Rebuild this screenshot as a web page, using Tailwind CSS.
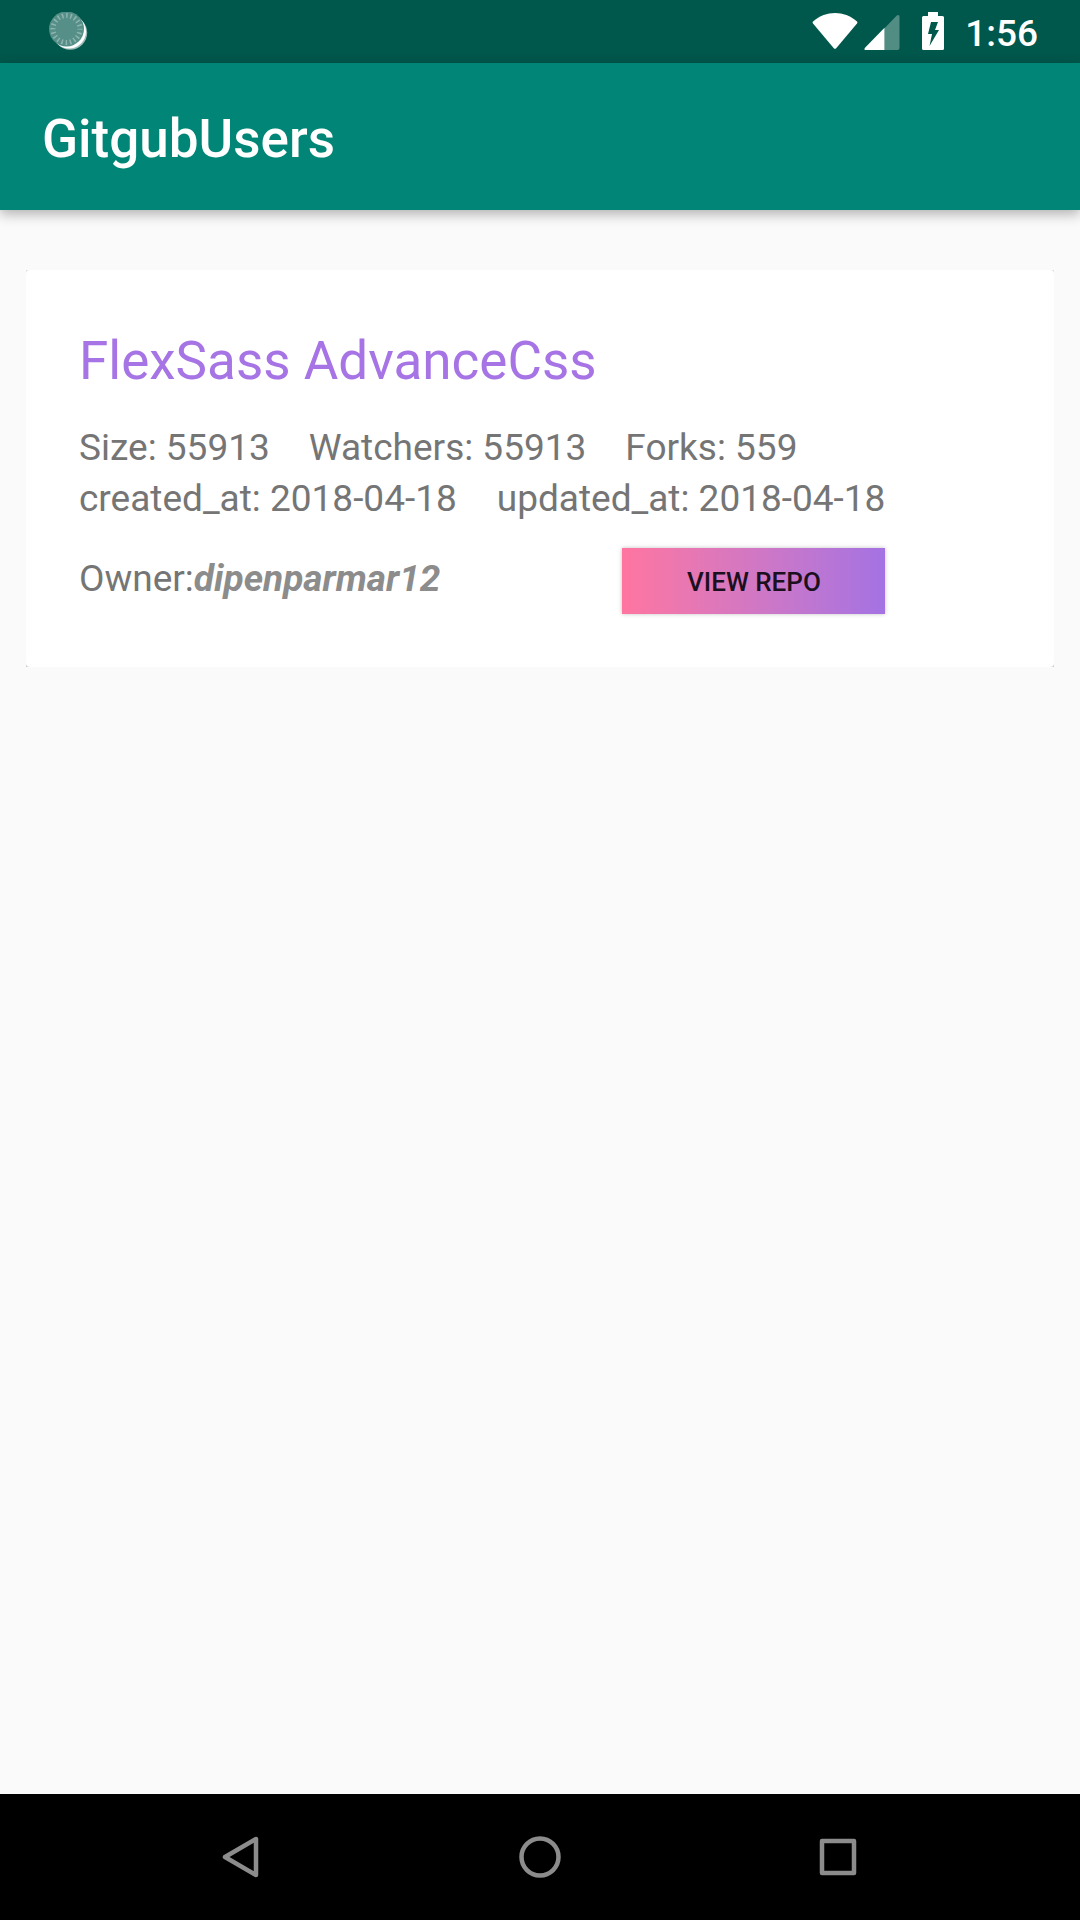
<!DOCTYPE html>
<html lang="en">
<head>
<meta charset="utf-8">
<meta name="viewport" content="width=device-width, initial-scale=1">
<title>GitgubUsers</title>
<script src="https://cdn.jsdelivr.net/npm/@tailwindcss/browser@4"></script>
</head>
<body class="flex min-h-screen flex-col bg-[#fafafa] font-[Roboto,sans-serif] text-[37px] leading-[51px] text-[#757575]">
  <div class="flex h-[63px] items-center justify-between bg-[#00574b] pr-[42px] pl-[49px] text-white">
    <svg class="size-10" viewBox="0 0 40 40" aria-hidden="true">
      <circle cx="21.200" cy="20.800" r="17" fill="#fff" fill-opacity=".6"/>
      <circle cx="20" cy="19.500" r="17" fill="#fff"/>
      <circle cx="17.500" cy="17" r="17.500" fill="#568f87"/>
      <circle cx="17.500" cy="17" r="13.500" fill="none" stroke="#8db4ae" stroke-width="5" stroke-dasharray="1.500 2.741" stroke-dashoffset=".75"/>
    </svg>
    <div class="flex items-center">
      <div class="flex items-center pb-px">
        <svg class="h-[38px] w-[46px]" viewBox="0 0 46 38" aria-hidden="true">
          <path d="M1 9.500C14-1.800 32-1.800 45 9.500q.8.800 0 2L24.200 36.200q-1.200 1.200-2.400 0L1 11.500q-.8-1.200 0-2Z" fill="#fff"/>
        </svg>
        <svg class="ml-[6px] h-[38px] w-[36px]" viewBox="0 0 36 38" aria-hidden="true">
          <path d="M35.500 5v31q0 2-2 2H20.500V16.200L32.800 3.600q2.700-1.500 2.700 1.400Z" fill="#fff" fill-opacity=".32"/>
          <path d="M20.500 15.800V38H2Q-.5 38 1 35.800Z" fill="#fff"/>
        </svg>
        <svg class="ml-[22px] h-[38px] w-[22px]" viewBox="0 0 22 38" aria-hidden="true">
          <path fill="#fff" fill-rule="evenodd" d="M6 0h10v4h4.500Q22 4 22 5.500v31q0 1.500-1.500 1.500h-19Q0 38 0 36.500v-31Q0 4 1.500 4H6Zm3 10L6 22h4L7.500 34 17 18h-4l3-8Z"/>
        </svg>
      </div>
      <time class="ml-[21px] pt-[4px] font-medium">1:56</time>
    </div>
  </div>

  <header class="relative flex h-[147px] items-center bg-[#008577] px-[42px] shadow-[0_4px_12px_rgba(0,0,0,0.3)]">
    <h1 class="pt-[4px] text-[53px] leading-[62px] font-medium text-white">GitgubUsers</h1>
  </header>

  <main class="flex-1 px-[26px] pt-[60px]">
    <div class="bg-linear-to-b from-[#e2e2e2] to-[#cfcfcf]">
      <article class="rounded-[4px] bg-white px-[53px] pt-[60px] pb-[53px]">
        <h2 class="text-[53px] leading-[62px] text-[#a674e4]">FlexSass AdvanceCss</h2>
        <div class="mt-[30px] w-fit">
          <div class="flex gap-[39px]">
            <span>Size: 55913</span>
            <span>Watchers: 55913</span>
            <span>Forks: 559</span>
          </div>
          <div class="flex gap-[40px]">
            <span>created_at: 2018-04-18</span>
            <span>updated_at: 2018-04-18</span>
          </div>
          <div class="mt-[24px] flex items-baseline justify-between">
            <p>Owner:<b class="text-[#8c8c8c] italic">dipenparmar12</b></p>
            <button type="button" class="h-[66px] w-[263px] bg-linear-to-r from-[#ff75a0] to-[#a472e3] pt-[2px] text-[26px] leading-[64px] font-medium text-[#1b1020] shadow-[0_0_4px_rgba(0,0,0,0.25)]">VIEW REPO</button>
          </div>
        </div>
      </article>
    </div>
  </main>

  <nav class="flex h-[126px] items-center justify-center bg-black" aria-label="System">
    <button type="button" class="flex h-full w-[298px] items-center justify-center" aria-label="Back">
      <svg class="size-[48px]" viewBox="0 0 48 48" fill="none" stroke="#8c8c8c" stroke-width="4.500" stroke-linejoin="round" aria-hidden="true"><path d="M38 6v36L7 24Z"/></svg>
    </button>
    <button type="button" class="flex h-full w-[298px] items-center justify-center" aria-label="Home">
      <svg class="size-[48px]" viewBox="0 0 48 48" fill="none" stroke="#8c8c8c" stroke-width="4.500" aria-hidden="true"><circle cx="24" cy="24" r="18.500"/></svg>
    </button>
    <button type="button" class="flex h-full w-[298px] items-center justify-center" aria-label="Overview">
      <svg class="size-[48px]" viewBox="0 0 48 48" fill="none" stroke="#8c8c8c" stroke-width="4.500" stroke-linejoin="round" aria-hidden="true"><path d="M8 8h32v32H8Z"/></svg>
    </button>
  </nav>
</body>
</html>
